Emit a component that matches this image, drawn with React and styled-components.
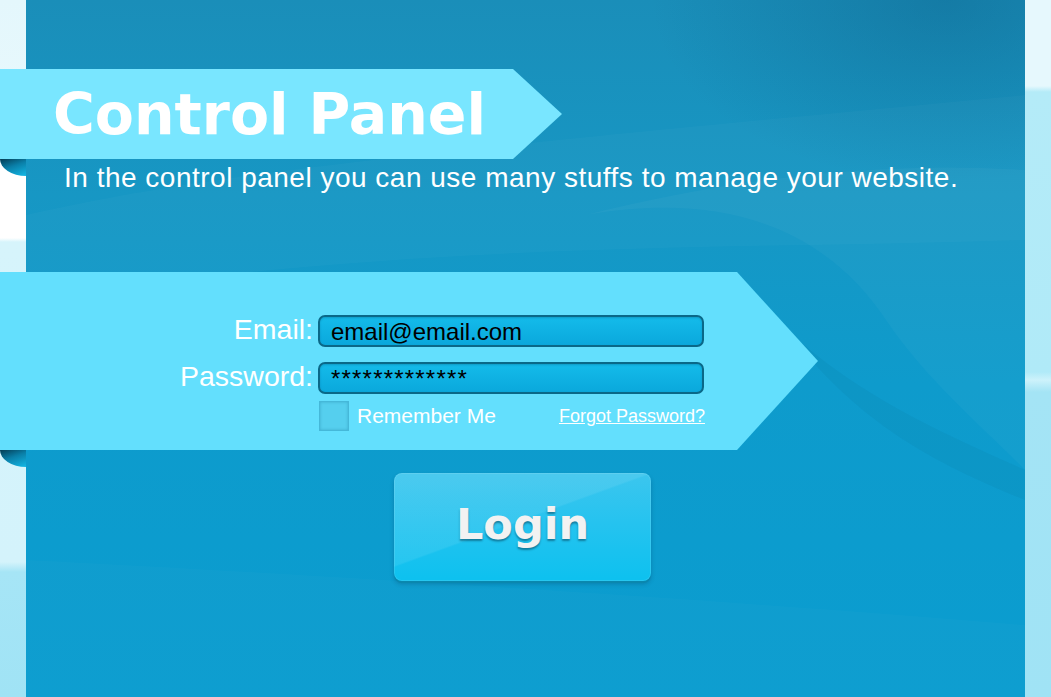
import React from "react";
import styled, { createGlobalStyle } from "styled-components";

const Global = createGlobalStyle`
  html, body { margin: 0; padding: 0; }
  body { font-family: "Liberation Sans", Arial, sans-serif; overflow: hidden; }
  * { box-sizing: border-box; }
`;

const Page = styled.div`
  width: 1051px;
  height: 697px;
  display: flex;
  overflow: hidden;
`;

const LeftStrip = styled.div`
  width: 26px;
  flex: none;
  background: linear-gradient(
    to bottom,
    #e4f7fc 0,
    #e9f9fd 150px,
    #ffffff 170px,
    #ffffff 238px,
    #d6f4fb 242px,
    #d4f3fb 562px,
    #a6e5f6 572px,
    #a0e3f5 697px
  );
`;

const RightStrip = styled.div`
  width: 26px;
  flex: none;
  background: linear-gradient(
    to bottom,
    #e6f8fd 0,
    #e6f8fd 86px,
    #b4ebf8 92px,
    #b0eaf8 372px,
    #cdf2fb 380px,
    #a4e4f5 392px,
    #a0e3f5 697px
  );
`;

const Main = styled.div`
  position: relative;
  flex: 1;
  display: flex;
  flex-direction: column;
  padding-top: 69px;
  background:
    radial-gradient(ellipse 420px 260px at 92% 0%, rgba(8, 80, 120, 0.3), transparent 70%),
    linear-gradient(180deg, #1a8eb9 0%, #1797c4 28%, #0e9bcc 55%, #0a9dd0 100%);
`;

const Waves = styled.svg`
  position: absolute;
  inset: 0;
  width: 100%;
  height: 100%;
  pointer-events: none;
`;

const Ribbon = styled.div`
  position: relative;
  margin-left: -26px;
  width: ${(p) => p.$w}px;
  height: ${(p) => p.$h}px;
  background: ${(p) => p.$bg};
  &::after {
    content: "";
    position: absolute;
    left: 100%;
    top: 0;
    border-left: ${(p) => p.$tip}px solid ${(p) => p.$bg};
    border-top: ${(p) => p.$h / 2}px solid transparent;
    border-bottom: ${(p) => p.$h / 2}px solid transparent;
  }
  &::before {
    content: "";
    position: absolute;
    left: 0;
    top: 100%;
    width: 26px;
    height: 17px;
    background: linear-gradient(160deg, #043c53 0%, #0a7fa8 45%, #13b8e6 100%);
    border-bottom-left-radius: 26px 17px;
  }
`;

const Title = styled.h1`
  margin: 0;
  padding-left: 53px;
  font-family: "DejaVu Sans", "Liberation Sans", sans-serif;
  font-weight: 700;
  font-size: 57px;
  line-height: 90px;
  letter-spacing: 0;
  color: #ffffff;
  white-space: nowrap;
`;

const Subtitle = styled.p`
  position: relative;
  margin: 4px 0 0 0;
  padding-left: 38px;
  font-size: 28px;
  line-height: 30px;
  letter-spacing: 0.5px;
  color: #ffffff;
  white-space: nowrap;
`;

const FormBand = styled(Ribbon)`
  margin-top: 79px;
  padding-top: 43px;
`;

const Grid = styled.div`
  position: relative;
  display: grid;
  grid-template-columns: 313px 386px;
  column-gap: 5px;
  row-gap: 15px;
`;

const Label = styled.label`
  justify-self: end;
  align-self: center;
  font-size: 28.5px;
  line-height: 32px;
  margin-top: -5px;
  color: #ffffff;
`;

const Field = styled.input`
  width: 386px;
  height: 32px;
  padding: 2px 0 0 11px;
  border: 2px solid #0a6888;
  border-radius: 7px;
  background: linear-gradient(180deg, #14bbea 0%, #0aa8dc 100%);
  box-shadow: inset 0 1px 2px rgba(0, 60, 90, 0.25);
  font-family: "Liberation Sans", Arial, sans-serif;
  font-size: 24px;
  letter-spacing: ${(p) => p.$spacing || 0}px;
  color: #000000;
  outline: none;
`;

const OptionsRow = styled.div`
  grid-column: 2;
  display: flex;
  align-items: center;
  margin-top: -8px;
`;

const Check = styled.span`
  width: 30px;
  height: 30px;
  margin-left: 1px;
  background: #55cfee;
  border: 1px solid #45b8d9;
  box-shadow: inset 0 0 3px rgba(0, 90, 130, 0.3);
`;

const CheckText = styled.span`
  margin-left: 8px;
  font-size: 21px;
  color: #ffffff;
`;

const Forgot = styled.a`
  margin-left: auto;
  margin-right: -1px;
  font-size: 18px;
  color: #ffffff;
  text-decoration: underline;
  cursor: pointer;
`;

const LoginButton = styled.button`
  position: relative;
  margin: 23px 0 0 368px;
  width: 257px;
  height: 108px;
  padding: 0 0 6px 0;
  border: none;
  border-radius: 8px;
  background:
    linear-gradient(160deg, rgba(255, 255, 255, 0.08) 0 46%, transparent 47%),
    linear-gradient(180deg, #3cc6ee 0%, #26c3ef 45%, #0dc1ef 100%);
  box-shadow:
    inset 0 0 0 1px rgba(255, 255, 255, 0.1),
    0 2px 0 #0a87ae,
    0 3px 4px rgba(0, 40, 70, 0.25);
  font-family: "DejaVu Sans", "Liberation Sans", sans-serif;
  font-weight: 700;
  font-size: 43px;
  color: #f2f2f2;
  text-shadow: 0 2px 2px rgba(0, 40, 60, 0.45);
  cursor: pointer;
`;

export default function App() {
  return (
    <>
      <Global />
      <Page>
        <LeftStrip />
        <Main>
          <Waves viewBox="0 0 999 697" preserveAspectRatio="none" aria-hidden="true">
            <path d="M0 215 C 200 170, 420 150, 999 95 L999 240 C 700 250, 400 240, 0 300 Z" fill="#ffffff" opacity="0.025" />
            <path d="M560 215 C 700 190, 800 230, 860 320 C 900 380, 960 430, 999 470 L999 170 C 850 160, 700 180, 560 215 Z" fill="#ffffff" opacity="0.03" />
            <path d="M760 330 C 840 400, 910 430, 999 470 L999 500 C 900 460, 830 420, 760 330 Z" fill="#04526f" opacity="0.07" />
            <path d="M0 560 C 300 575, 700 600, 999 625 L999 697 L0 697 Z" fill="#ffffff" opacity="0.02" />
          </Waves>

          <Ribbon $w={513} $h={90} $tip={49} $bg="#79e6ff">
            <Title>Control Panel</Title>
          </Ribbon>

          <Subtitle>In the control panel you can use many stuffs to manage your website.</Subtitle>

          <FormBand as="form" $w={737} $h={178} $tip={81} $bg="#63dffd" onSubmit={(e) => e.preventDefault()}>
            <Grid>
              <Label htmlFor="email">Email:</Label>
              <Field id="email" type="text" defaultValue="email@email.com" readOnly />
              <Label htmlFor="password">Password:</Label>
              <Field id="password" type="text" defaultValue="*************" $spacing={1.2} readOnly />
              <OptionsRow>
                <Check role="checkbox" aria-checked="false" />
                <CheckText>Remember Me</CheckText>
                <Forgot>Forgot Password?</Forgot>
              </OptionsRow>
            </Grid>
          </FormBand>

          <div>
            <LoginButton type="button">Login</LoginButton>
          </div>
        </Main>
        <RightStrip />
      </Page>
    </>
  );
}
